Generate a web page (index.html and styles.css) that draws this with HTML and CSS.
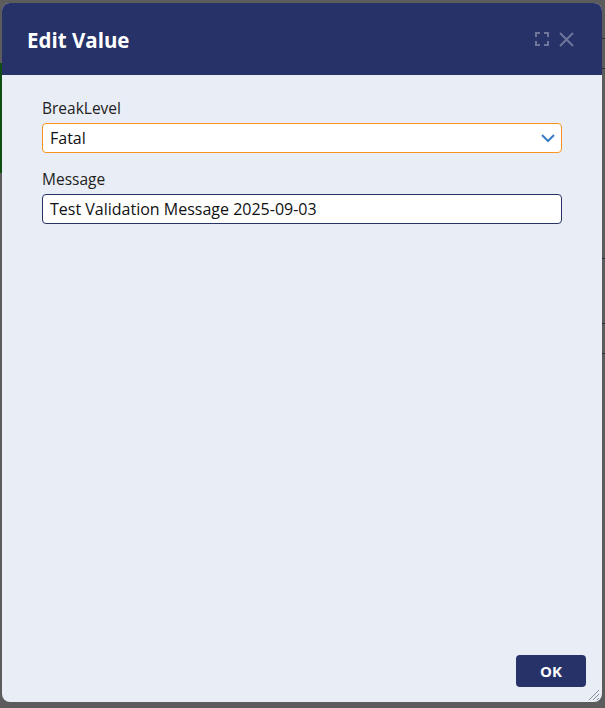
FILE: index.html
```html
<!DOCTYPE html>
<html lang="en">
<head>
    <meta charset="UTF-8">
    <title>Edit Value</title>
    <link rel="stylesheet" href="styles.css">
</head>
<body>
    <!-- page behind the overlay -->
    <div class="backdrop">
        <div class="bg-strip"></div>
        <div class="bg-lines">
            <span style="top: 38px"></span>
            <span style="top: 68px"></span>
            <span style="top: 258px"></span>
            <span style="top: 323px"></span>
            <span style="top: 353px"></span>
        </div>
    </div>

    <div class="dialog">
        <div class="dialog-header">
            <h1>Edit Value</h1>
            <div class="header-tools">
                <svg width="14" height="14" viewBox="0 0 14 14" fill="none" stroke="#6f7699" stroke-width="2">
                    <path d="M1 5V1h4M9 1h4v4M13 9v4H9M5 13H1V9"/>
                </svg>
                <svg width="15" height="15" viewBox="0 0 15 15" fill="none" stroke="#6f7699" stroke-width="2">
                    <path d="M1 1l13 13M14 1L1 14"/>
                </svg>
            </div>
        </div>

        <div class="dialog-body">
            <div class="form-group">
                <label>BreakLevel</label>
                <div class="select-box">
                    <span>Fatal</span>
                    <svg width="14" height="9" viewBox="0 0 14 9" fill="none" stroke="#3a7ec4" stroke-width="2">
                        <path d="M1 1l6 6 6-6"/>
                    </svg>
                </div>
            </div>
            <div class="form-group">
                <label>Message</label>
                <div class="text-box">Test Validation Message 2025-09-03</div>
            </div>
        </div>

        <div class="dialog-footer">
            <button class="ok-btn">OK</button>
        </div>
        <svg class="grip" width="12" height="12" viewBox="0 0 12 12" stroke="#8a8f9c" stroke-width="1">
            <path d="M11 1L1 11M11 5L5 11M11 9L9 11"/>
        </svg>
    </div>
</body>
</html>
```

FILE: styles.css
```css
body {
    margin: 0;
    width: 605px;
    height: 708px;
    background-color: #5c5c5c;
    font-family: 'Open Sans', Lato, sans-serif;
    overflow: hidden;
    position: relative;
}
.backdrop {
    position: absolute;
    inset: 0;
}
.bg-strip {
    position: absolute;
    left: 0;
    top: 63px;
    width: 3px;
    height: 110px;
    background-color: #0f4d12;
}
.bg-lines span {
    position: absolute;
    right: 0;
    width: 3px;
    height: 1px;
    background-color: #2c2f3a;
}
.dialog {
    position: absolute;
    left: 2px;
    top: 3px;
    width: 600px;
    height: 699px;
    background-color: #e9edf5;
    border-radius: 8px;
    display: flex;
    flex-direction: column;
    overflow: hidden;
}
.dialog-header {
    height: 72px;
    background-color: #263268;
    display: flex;
    align-items: center;
    justify-content: space-between;
    padding: 0 28px 0 25px;
}
.dialog-header h1 {
    margin: 0;
    color: #ffffff;
    font-size: 20.5px;
    font-weight: 700;
    margin-top: 1px;
}
.header-tools {
    display: flex;
    align-items: center;
    gap: 10px;
}
.dialog-body {
    flex: 1;
    padding: 23px 40px 0 40px;
}
.form-group {
    margin-bottom: 16px;
}
.form-group label {
    display: block;
    font-size: 15.5px;
    line-height: 20px;
    color: #222;
    margin-bottom: 5px;
}
.select-box, .text-box {
    height: 28px;
    background-color: #ffffff;
    border-radius: 4px;
    font-size: 16px;
    color: #111;
    padding: 0 7px;
    display: flex;
    align-items: center;
}
.select-box {
    border: 1px solid #f7941d;
    justify-content: space-between;
    padding-right: 6px;
}
.text-box {
    border: 1px solid #263268;
}
.dialog-footer {
    display: flex;
    justify-content: flex-end;
    padding: 0 16px 15px 0;
}
.ok-btn {
    width: 70px;
    height: 32px;
    background-color: #263268;
    color: #ffffff;
    border: none;
    border-radius: 4px;
    font-family: 'Open Sans', Lato, sans-serif;
    font-size: 15px;
    font-weight: 700;
    cursor: pointer;
}
.grip {
    position: absolute;
    right: 2px;
    bottom: 1px;
}
```
